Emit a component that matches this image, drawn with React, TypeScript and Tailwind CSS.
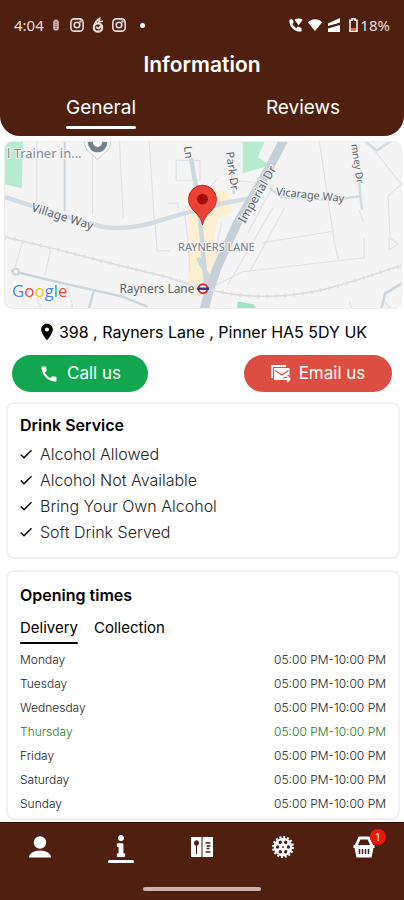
import React, { useState } from 'react';
import clsx from 'clsx';
import { FaInfo } from 'react-icons/fa';
import { MdCall, MdCheck, MdLocationOn } from 'react-icons/md';

const services = ['Alcohol Allowed', 'Alcohol Not Available', 'Bring Your Own Alcohol', 'Soft Drink Served'];
const days = ['Monday', 'Tuesday', 'Wednesday', 'Thursday', 'Friday', 'Saturday', 'Sunday'];
const today = 'Thursday';

const Instagram = () => (
  <svg viewBox="0 0 16 16" className="size-3.5" fill="none" stroke="currentColor" strokeWidth="1.8">
    <rect x="1" y="1" width="14" height="14" rx="4" />
    <circle cx="8" cy="8" r="3.2" />
    <circle cx="12" cy="4" r="0.5" />
  </svg>
);

const StatusBar = () => (
  <div className="flex h-[50px] items-center justify-between px-3.5 text-[#eadfda]">
    <div className="flex items-center">
      <span className="mr-2 font-['Noto_Sans'] text-[15px]">4:04</span>
      <svg viewBox="0 0 10 16" className="mr-2.5 h-3.5 w-2">
        <path d="M3 1h4v2h1.5v10L7 15H3l-1.5-2V3H3z" fill="currentColor" opacity="0.8" />
        <path d="M4 4.5h2M4 7h2M4 9.5h2M4 12h2" stroke="#4f1f0f" strokeWidth="1" />
      </svg>
      <Instagram />
      <svg viewBox="0 0 12 16" className="mx-2 h-4 w-3">
        <circle cx="6" cy="10.5" r="4.200" fill="none" stroke="currentColor" strokeWidth="2.2" />
        <path d="M2 9C3 5.500 5 3 7.500 1.500L7 5l4-1M4 10l2.500 1.500L10 8" fill="none" stroke="currentColor" strokeWidth="1.800" />
      </svg>
      <Instagram />
      <span className="ml-3.5 size-[5px] rounded-full bg-white" />
    </div>
    <div className="flex items-center text-white">
      <svg viewBox="0 0 14 14" className="mr-1 size-3.5" fill="currentColor">
        <path d="M.5 1.800 3 1l1.800 3.300L3.500 6c.8 1.800 2 3 3.800 3.900l1.700-1.500L12.500 10v3.500C6 14.500-.5 8.500.500 1.800z" />
        <path d="M5.500 1.800c2.400-1.600 5.900-1.600 8.300 0L9.600 7.200z" />
      </svg>
      <svg viewBox="0 0 16 14" className="mr-1 h-3.5 w-4" fill="currentColor">
        <path d="M0.800 4.200C5 .2 11 .2 15.200 4.200L8 13z" />
      </svg>
      <svg viewBox="0 0 14 14" className="mr-2 size-3.5">
        <path d="M13 0v14H1v-3.500L13 7zM13 0v5L1 8V5.500z" fill="currentColor" />
        <path d="M0 9.500 14 5" stroke="#4f1f0f" strokeWidth="1.600" />
      </svg>
      <svg viewBox="0 0 9 14" className="mr-0.5 h-3.5 w-[9px]">
        <path d="M3 .8h3v1.400h2v11H1v-11h2z" fill="none" stroke="currentColor" strokeWidth="1.500" />
        <path d="M2 10h5v2.500H2z" fill="#f0643c" />
      </svg>
      <span className="font-['Noto_Sans'] text-[15px] text-[#eadfda]">18%</span>
    </div>
  </div>
);

const Header = () => {
  const [tab, setTab] = useState('General');
  return (
    <header className="shrink-0 rounded-b-[20px] bg-[#4f1f0f] pb-[7px] text-white">
      <StatusBar />
      <h1 className="text-center text-[21px] font-semibold leading-[30px]">Information</h1>
      <nav className="mt-4 grid grid-cols-2 justify-items-center">
        {['General', 'Reviews'].map((name) => (
          <button key={name} onClick={() => setTab(name)} className="text-[19px] leading-6">
            {name}
            <span className={clsx('mt-[6px] block h-[3px] rounded-full', tab === name && 'bg-white')} />
          </button>
        ))}
      </nav>
    </header>
  );
};

const StreetMap = () => (
  <div className="ml-1 mr-0.5 h-[168px] overflow-hidden rounded-lg border border-[#ececec] bg-[#f4f4f5]">
    <svg viewBox="4 141 398 168" preserveAspectRatio="xMidYMid slice" className="size-full" fill="none" role="img" aria-label="Map of Rayners Lane">
      <path d="M4 141h18l-1 47-17-4z" fill="#b5ecd0" />
      <path d="M243 141h22l-7 16 13 8-28 8z" fill="#b5ecd0" />
      <path d="M238 302l16 3 4 6h-21z" fill="#9fe3c4" />
      <path d="M186 192l25-4 17 4 5 20-15 6-4 18 2 24-12 36h-14l-3-22 3-30z" fill="#fcf0d3" />
      <g stroke="#dfe1e4" strokeWidth="1.2">
        <path d="M36 141v61M92 150v64M119 141l4 78M149 141l5 80M176 160h24v20h-24zM155 225l2 26h13M178 208v-5h-10M320 141l15 101 4 18M262 243l73-12M250 272l35-64M210 288l33-16 122-14v-20M364 222l-4-12M228 285l45-77M384 300l8 10M350 302l3 8M22 240l-8 28M50 250l-6 26M32 288l8 20M66 284l6 24M402 184l-30-38M402 184l-13 12 2 42 8 6-9 6v-12" />
        <path d="M184 208l4 34 2 30M216 248l6-26M206 192l12-14M232 182l12-1 30 4-26 48" />
      </g>
      <path d="M64 141v70" stroke="#ccd4d9" strokeWidth="2" />
      <path d="M4 197l31 10 35 11 33 9q20 3 45-3l30-9 22-6 24-6 27-5" stroke="#d3dce2" strokeWidth="4.5" />
      <path d="M191 158l5 29 5 42 5 55M198 258l14 26" stroke="#cdd7df" strokeWidth="4.5" />
      <path d="M285 138l-20 38-28 48-20 44-8 24-6 22" stroke="#c7d0d8" strokeWidth="9" />
      <path d="M270 188l12 9 50 3 29-4-1-22M361 196l2 14M232 170l2 24M366 141l12 9 15-10" stroke="#d5dce0" strokeWidth="2.5" />
      <path d="M10 271l50 12 62 14 25 10M93 292l-5 18M382 310l4-16 16-10" stroke="#cbd6da" strokeWidth="2.5" />
      <circle cx="15" cy="272" r="3" stroke="#cbd6e0" strokeWidth="2" fill="#f4f4f5" />
      <path d="M4 237l50 12 62 16 50 12 36 12 28 5q58 9 122-12l50-16" stroke="#dbdbde" strokeWidth="1.5" />
      <path d="M4 237l50 12 62 16 50 12 36 12 28 5q58 9 122-12l50-16" stroke="#e0e0e3" strokeWidth="4" strokeDasharray="2 7" />

      <g className="font-['Noto_Sans']" fill="#5b6268" fontSize="11" stroke="#f4f4f5" strokeWidth="2" paintOrder="stroke">
        <text x="6" y="158" fontSize="13" fill="#858a90">l Trainer in...</text>
        <text transform="translate(30 211) rotate(17)" fontSize="12">Village Way</text>
        <text transform="translate(276 195) rotate(6)">Vicarage Way</text>
        <text transform="translate(245 224) rotate(-60)" fontSize="12">Imperial Dr</text>
        <text transform="translate(226 152) rotate(82)">Park Dr</text>
        <text transform="translate(352 144) rotate(82)" fontSize="10">mney Dr</text>
        <text transform="translate(184 146) rotate(84)">Ln</text>
        <text x="178" y="251" fontSize="11" fill="#777b80">RAYNERS LANE</text>
        <text x="119" y="293" fontSize="12">Rayners Lane</text>
      </g>

      <path d="M84 141a13 13 0 0 0 5 11l8 7 8-7a13 13 0 0 0 5-11z" fill="#fff" stroke="#c3c8cc" />
      <path d="M87 141a10 11 0 0 0 20 0z" fill="#71838f" />
      <circle cx="97" cy="142" r="4.5" fill="#fff" />
      <circle cx="203" cy="289" r="4.5" stroke="#d7263d" strokeWidth="2" fill="#fff" />
      <path d="M197 289h12" stroke="#2d3a8c" strokeWidth="2.5" />
      <path d="M202.500 225c-1.500-12-14-14-14-26a14 14 0 0 1 28 0c0 12-12.500 14-14 26z" fill="#ea4335" stroke="#c5221f" />
      <circle cx="202.500" cy="199" r="5.500" fill="#a50e0e" />
      <text x="11" y="297" fontSize="17" fontWeight="500" className="font-['Open_Sans']" stroke="#fff" strokeWidth="2" paintOrder="stroke">
        <tspan fill="#4285f4">G</tspan>
        <tspan fill="#ea4335">o</tspan>
        <tspan fill="#fbbc05">o</tspan>
        <tspan fill="#4285f4">g</tspan>
        <tspan fill="#34a853">l</tspan>
        <tspan fill="#ea4335">e</tspan>
      </text>
    </svg>
  </div>
);

const EmailIcon = () => (
  <svg viewBox="0 0 20 18" className="h-[18px] w-5" fill="none">
    <path d="M1 13V1h14" stroke="currentColor" strokeWidth="1.8" />
    <path d="M3 3h15.500v12H3z" fill="currentColor" />
    <path d="M4 5.500l6.800 4.500 6.700-4.500" stroke="#dc4e41" strokeWidth="1.200" />
    <path d="M12.500 14h6M16 11l3 3-3 3" stroke="#dc4e41" strokeWidth="4" />
    <path d="M12.500 14h6M16 11.200l2.800 2.800-2.800 2.800" stroke="currentColor" strokeWidth="1.8" />
  </svg>
);

const PersonIcon = () => (
  <svg viewBox="0 0 22 22" className="size-[22px]" fill="currentColor">
    <circle cx="11" cy="6.5" r="6.200" />
    <path d="M0 21.500c0-4 5-7 11-7s11 3 11 7z" />
  </svg>
);

const MenuIcon = () => (
  <svg viewBox="0 0 22 22" className="size-[22px]">
    <path d="M0 1h22v20H0z" fill="currentColor" />
    <path d="M10 1h2v20h-2z" fill="#a08a81" />
    <ellipse cx="5.5" cy="7" rx="2.4" ry="2.8" fill="#4f1f0f" />
    <path d="M5.500 8v10" stroke="#4f1f0f" strokeWidth="1.2" />
    <path d="M14.500 7h5M15.500 10h4M15.500 12.500h3M14.500 16h5" stroke="#4f1f0f" strokeWidth="1.3" />
  </svg>
);

const GearIcon = () => (
  <svg viewBox="0 0 24 24" className="size-6">
    <circle cx="12" cy="12" r="10" fill="none" stroke="currentColor" strokeWidth="2" strokeDasharray="2 1.927" />
    <circle cx="12" cy="12" r="9.3" fill="currentColor" />
    <g fill="#4f1f0f">
      {[0, 60, 120, 180, 240, 300].map((angle) => (
        <circle key={angle} cx="12" cy="6.6" r="1.700" transform={`rotate(${angle + 30} 12 12)`} />
      ))}
      <circle cx="12" cy="12" r="0.9" />
    </g>
  </svg>
);

const BasketIcon = () => (
  <svg viewBox="0 0 24 24" className="size-6">
    <path d="M4 11 7.500 3h9L20 11" fill="none" stroke="currentColor" strokeWidth="2.8" strokeLinejoin="round" />
    <path d="M1.500 10h21v3h-1L19.500 22.500h-15l-2-9.500h-1z" fill="currentColor" />
    <path d="M7.500 14v5M10.500 14v5M13.500 14v5M16.500 14v5" stroke="#4f1f0f" strokeWidth="1.500" />
  </svg>
);

const DrinkService = () => (
  <section className="ml-1.5 mr-1 mt-2.5 rounded-lg border-2 border-[#f0f0f0] px-3 pb-3 pt-2">
    <h2 className="text-base font-semibold leading-[26px]">Drink Service</h2>
    <ul className="mt-[3px] text-base font-light leading-[26px] text-[#222]">
      {services.map((service) => (
        <li key={service} className="flex items-center gap-1.5">
          <MdCheck className="-ml-0.5 size-4 text-black" />
          {service}
        </li>
      ))}
    </ul>
  </section>
);

const OpeningTimes = () => {
  const [mode, setMode] = useState('Delivery');
  return (
    <section className="ml-1.5 mr-1 mt-[11px] rounded-lg border-2 border-[#f0f0f0] px-3 pb-0.5 pt-2.5">
      <h2 className="text-base font-semibold leading-[26px]">Opening times</h2>
      <div className="mt-2 flex gap-4">
        {['Delivery', 'Collection'].map((name) => (
          <button key={name} onClick={() => setMode(name)} className="text-[15px] leading-6">
            {name}
            <span className={clsx('mt-0.5 block h-0.5 rounded-full', mode === name && 'bg-black')} />
          </button>
        ))}
      </div>
      <table className="mt-1 w-full text-[12px] font-light leading-6 text-[#222]">
        <tbody>
          {days.map((day) => (
            <tr key={day} className={day === today ? 'text-[#1b7a22]' : ''}>
              <th scope="row" className="p-0 text-left font-light">{day}</th>
              <td className="p-0 text-right">05:00 PM-10:00 PM</td>
            </tr>
          ))}
        </tbody>
      </table>
    </section>
  );
};

const BottomNav = () => (
  <footer className="h-[78px] shrink-0 border-t border-[#390a00] bg-[#4f1f0f] text-white">
    <nav className="grid h-12 grid-cols-5 place-items-center">
      <button aria-label="Account"><PersonIcon /></button>
      <button aria-label="Information" className="flex flex-col items-center gap-[3px] pt-1">
        <FaInfo className="size-[22px]" />
        <span className="h-[3px] w-[26px] rounded-full bg-white" />
      </button>
      <button aria-label="Menu"><MenuIcon /></button>
      <button aria-label="Settings"><GearIcon /></button>
      <button aria-label="Basket" className="relative">
        <BasketIcon />
        <span className="absolute -right-2.5 -top-1.5 flex size-4 items-center justify-center rounded-full bg-[#ee1509] text-[10px]">1</span>
      </button>
    </nav>
    <div className="mx-auto mt-4 h-1 w-[118px] rounded-full bg-[#c9b5ad]" />
  </footer>
);

const App = () => (
  <div className="flex h-dvh flex-col bg-white font-['Inter',sans-serif] text-black">
    <Header />
    <main className="min-h-0 flex-1 overflow-y-auto pt-[5px] [scrollbar-width:none]">
      <StreetMap />
      <address className="mt-[11px] flex items-center justify-center gap-0.5 text-base not-italic leading-6">
        <MdLocationOn className="size-5" />
        398 , Rayners Lane , Pinner HA5 5DY UK
      </address>
      <div className="mx-3 mt-[11px] flex justify-between text-[17px] text-white">
        <button className="flex h-[37px] w-[136px] items-center justify-center gap-2 rounded-full bg-[#12a650]">
          <MdCall className="size-5" />
          Call us
        </button>
        <button className="flex h-[37px] w-[148px] items-center justify-center gap-2 rounded-full bg-[#dc4e41]">
          <EmailIcon />
          Email us
        </button>
      </div>
      <DrinkService />
      <OpeningTimes />
    </main>
    <BottomNav />
  </div>
);

export default App;
